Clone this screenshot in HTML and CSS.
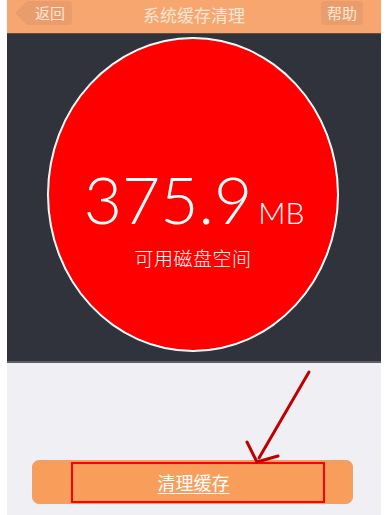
FILE: index.html
```html
<!DOCTYPE html>
<html lang="zh">
<head>
<meta charset="utf-8">
<link rel="stylesheet" href="styles.css">
</head>
<body>
<div class="screen">
  <header class="nav">
    <div class="back">返回</div>
    <div class="title">系统缓存清理</div>
    <div class="help">帮助</div>
  </header>
  <section class="stage">
    <div class="disk">
      <div class="amount"><span class="num">375.9</span><span class="unit">MB</span></div>
      <div class="label">可用磁盘空间</div>
    </div>
  </section>
  <section class="bottom">
    <div class="btn"><span class="btn-text">清理缓存</span><span class="mark"></span></div>
  </section>
  <svg class="arrow" width="80" height="100" viewBox="0 0 80 100">
    <line x1="72" y1="4" x2="22" y2="90" stroke="#c00000" stroke-width="3" stroke-linecap="round"/>
    <polyline points="10,74 20,94 41,88" fill="none" stroke="#c00000" stroke-width="3" stroke-linecap="round" stroke-linejoin="round"/>
  </svg>
</div>
</body>
</html>
```
FILE: styles.css
```css
html, body {
  margin: 0;
  padding: 0;
  background: #ffffff;
}
body {
  width: 389px;
  height: 515px;
  overflow: hidden;
  font-family: "Noto Sans CJK SC", "Noto Sans", sans-serif;
}
.screen {
  position: relative;
  margin: 0 8px 0 7px;
  height: 515px;
  display: flex;
  flex-direction: column;
  background: #efeff4;
}
.nav {
  height: 33px;
  background: #f6a66e;
  border-bottom: 1px solid #6a4a3a;
  display: flex;
  align-items: flex-start;
  justify-content: space-between;
  padding: 0 18px 0 8px;
  position: relative;
}
.back {
  margin-top: 1px;
  height: 24px;
  width: 57px;
  box-sizing: border-box;
  padding-left: 20px;
  background: #e99c6c;
  clip-path: polygon(0 50%, 12px 0, 100% 0, 100% 100%, 12px 100%);
  border-radius: 0 4px 4px 0;
  color: #fbe7d7;
  font-size: 15px;
  line-height: 24px;
}
.title {
  position: absolute;
  left: 0;
  right: 0;
  top: 0;
  text-align: center;
  color: #fbe7d7;
  font-size: 17px;
  line-height: 29px;
  pointer-events: none;
}
.help {
  margin-top: 1px;
  height: 24px;
  width: 42px;
  background: #e99c6c;
  border-radius: 4px;
  color: #fbe7d7;
  font-size: 15px;
  line-height: 24px;
  text-align: center;
}
.stage {
  background: #30333c;
  border-bottom: 2px solid #5e6168;
  display: flex;
  justify-content: center;
  align-items: flex-start;
  padding-top: 3px;
  padding-right: 2px;
  box-sizing: border-box;
  height: 329px;
}
.disk {
  width: 292px;
  height: 315px;
  border-radius: 50%;
  background: #ff0000;
  border: 2px solid #ffffff;
  box-sizing: border-box;
  display: flex;
  flex-direction: column;
  align-items: center;
  color: #ffffff;
}
.amount {
  margin-top: 127px;
  display: flex;
  align-items: baseline;
  font-family: "Lato", "Roboto", sans-serif;
  font-weight: 300;
  margin-left: 2px;
}
.num {
  font-size: 66px;
  line-height: 66px;
}
.unit {
  font-size: 30px;
  margin-left: 6px;
}
.label {
  margin-top: 15px;
  font-size: 19px;
  line-height: 22px;
  letter-spacing: 0.5px;
  font-weight: 300;
}
.bottom {
  flex: 1;
  display: flex;
  flex-direction: column;
  justify-content: flex-end;
  padding: 0 28px 11px 25px;
}
.btn {
  position: relative;
  height: 44px;
  background: #f89e5a;
  border: 1px solid #e7a173;
  border-radius: 7px;
  box-sizing: border-box;
  display: flex;
  align-items: center;
  justify-content: center;
}
.btn-text {
  color: #ffffff;
  font-size: 18px;
  text-decoration: underline;
  text-underline-offset: 3px;
  margin-left: 2px;
}
.mark {
  position: absolute;
  left: 38px;
  right: 27px;
  top: 1px;
  bottom: 0px;
  border: 2px solid #ff0000;
}
.arrow {
  position: absolute;
  left: 230px;
  top: 368px;
}
```
